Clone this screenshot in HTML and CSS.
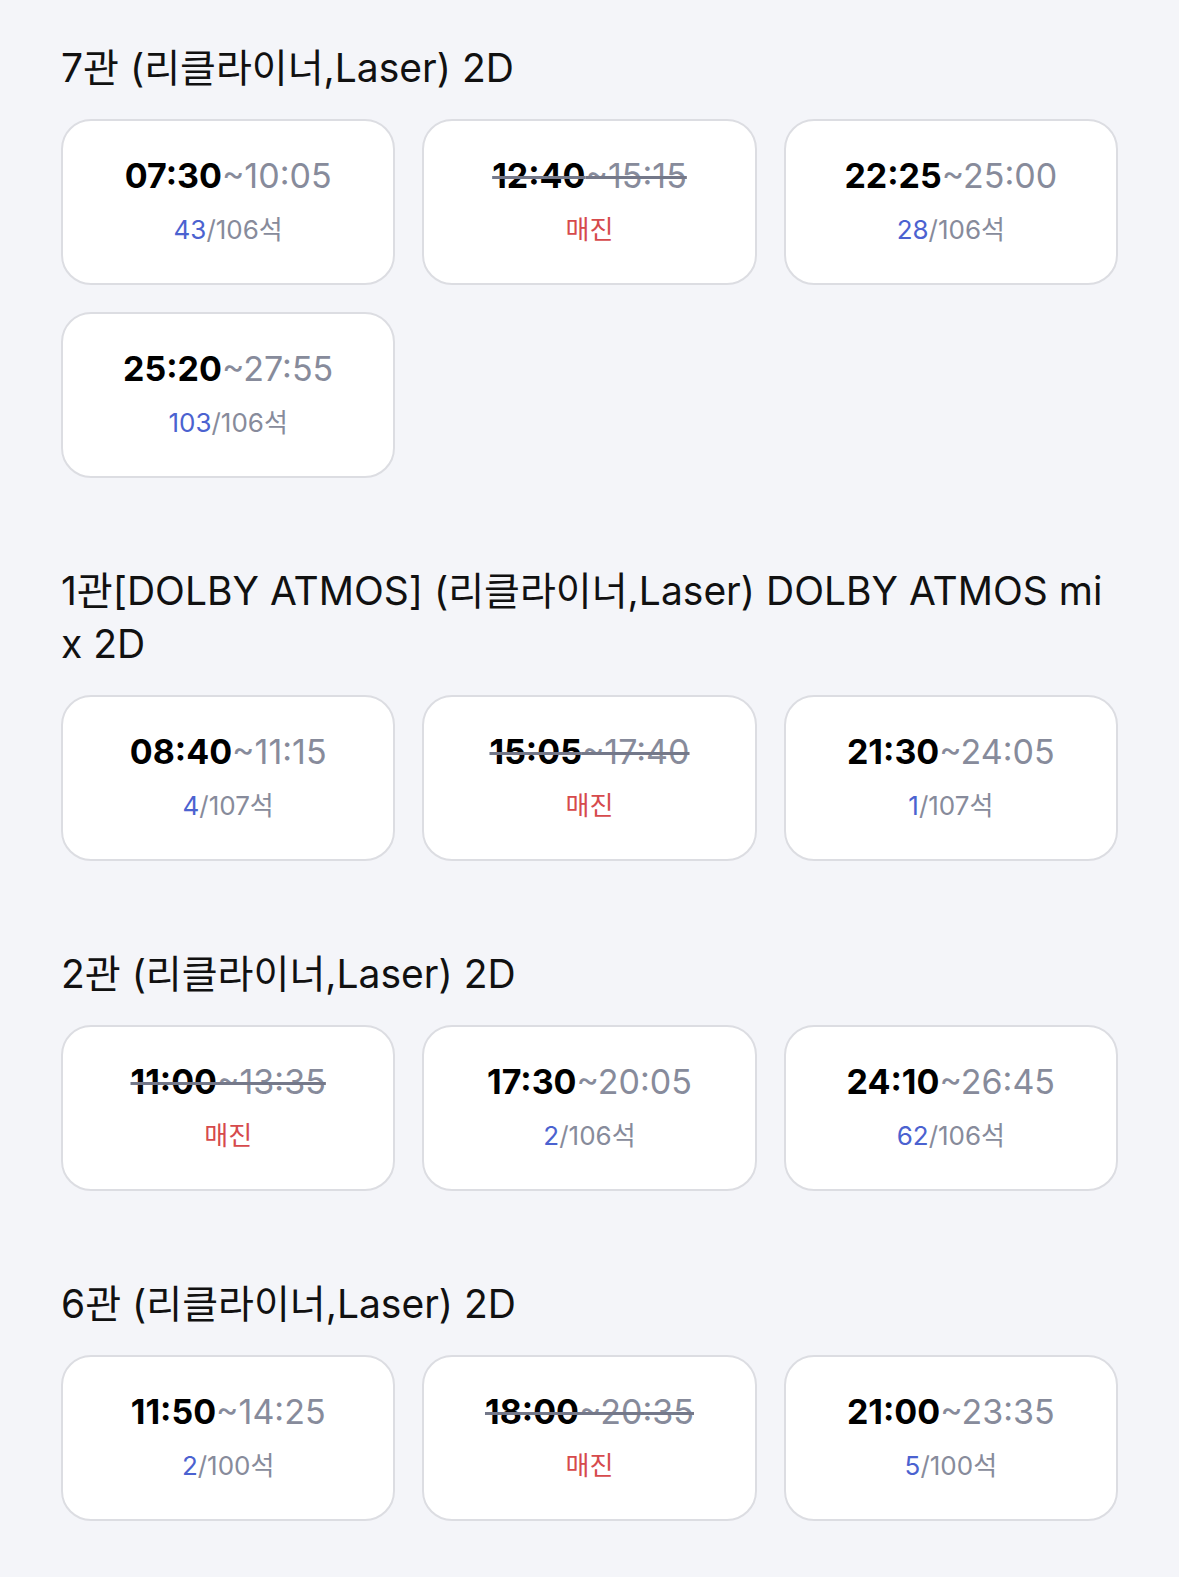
FILE: index.html
```html
<!DOCTYPE html>
<html lang="ko">
<head>
  <meta charset="UTF-8">
  <meta name="viewport" content="width=device-width, initial-scale=1.0">
  <title>상영시간표</title>
  <link rel="stylesheet" href="styles.css">
</head>
<body>
  <div class="page">

    <section class="hall">
      <h2 class="hall-title">7관 (리클라이너,Laser) 2D</h2>
      <div class="times">
        <div class="time-card">
          <div class="time"><b>07:30</b><span class="end">~10:05</span></div>
          <div class="seats"><span class="left">43</span>/106석</div>
        </div>
        <div class="time-card sold-out">
          <div class="time"><b>12:40</b><span class="end">~15:15</span></div>
          <div class="seats">매진</div>
        </div>
        <div class="time-card">
          <div class="time"><b>22:25</b><span class="end">~25:00</span></div>
          <div class="seats"><span class="left">28</span>/106석</div>
        </div>
        <div class="time-card">
          <div class="time"><b>25:20</b><span class="end">~27:55</span></div>
          <div class="seats"><span class="left">103</span>/106석</div>
        </div>
      </div>
    </section>

    <section class="hall">
      <h2 class="hall-title">1관[DOLBY ATMOS] (리클라이너,Laser) DOLBY ATMOS mix 2D</h2>
      <div class="times">
        <div class="time-card">
          <div class="time"><b>08:40</b><span class="end">~11:15</span></div>
          <div class="seats"><span class="left">4</span>/107석</div>
        </div>
        <div class="time-card sold-out">
          <div class="time"><b>15:05</b><span class="end">~17:40</span></div>
          <div class="seats">매진</div>
        </div>
        <div class="time-card">
          <div class="time"><b>21:30</b><span class="end">~24:05</span></div>
          <div class="seats"><span class="left">1</span>/107석</div>
        </div>
      </div>
    </section>

    <section class="hall">
      <h2 class="hall-title">2관 (리클라이너,Laser) 2D</h2>
      <div class="times">
        <div class="time-card sold-out">
          <div class="time"><b>11:00</b><span class="end">~13:35</span></div>
          <div class="seats">매진</div>
        </div>
        <div class="time-card">
          <div class="time"><b>17:30</b><span class="end">~20:05</span></div>
          <div class="seats"><span class="left">2</span>/106석</div>
        </div>
        <div class="time-card">
          <div class="time"><b>24:10</b><span class="end">~26:45</span></div>
          <div class="seats"><span class="left">62</span>/106석</div>
        </div>
      </div>
    </section>

    <section class="hall">
      <h2 class="hall-title">6관 (리클라이너,Laser) 2D</h2>
      <div class="times">
        <div class="time-card">
          <div class="time"><b>11:50</b><span class="end">~14:25</span></div>
          <div class="seats"><span class="left">2</span>/100석</div>
        </div>
        <div class="time-card sold-out">
          <div class="time"><b>18:00</b><span class="end">~20:35</span></div>
          <div class="seats">매진</div>
        </div>
        <div class="time-card">
          <div class="time"><b>21:00</b><span class="end">~23:35</span></div>
          <div class="seats"><span class="left">5</span>/100석</div>
        </div>
      </div>
    </section>

  </div>
</body>
</html>
```

FILE: styles.css
```css
body {
  margin: 0;
  padding: 0;
  background-color: #f4f5f9;
  font-family: Inter, "Noto Sans CJK KR", sans-serif;
  color: #111;
}

.page {
  padding: 41px 61px 40px;
}

.hall {
  margin-bottom: 86px;
}

.hall-title {
  margin: 0 0 25px;
  font-size: 39px;
  font-weight: 400;
  line-height: 53px;
  word-break: break-all;
  color: #111;
}

.times {
  display: grid;
  grid-template-columns: repeat(3, 1fr);
  gap: 27px;
}

.time-card {
  box-sizing: border-box;
  height: 166px;
  padding-top: 33px;
  background-color: #fff;
  border: 2px solid #dcdde2;
  border-radius: 30px;
  text-align: center;
}

.time {
  font-size: 34px;
  line-height: 44px;
  color: #000;
}

.time b {
  font-weight: 700;
}

.time .end {
  color: #878b9b;
}

.sold-out .time {
  text-decoration: line-through;
  text-decoration-color: #747889;
  text-decoration-thickness: 3px;
}

.seats {
  margin-top: 15px;
  font-size: 26px;
  line-height: 34px;
  color: #878b9b;
}

.seats .left {
  color: #4b62d0;
}

.sold-out .seats {
  color: #d64a4c;
}
```
